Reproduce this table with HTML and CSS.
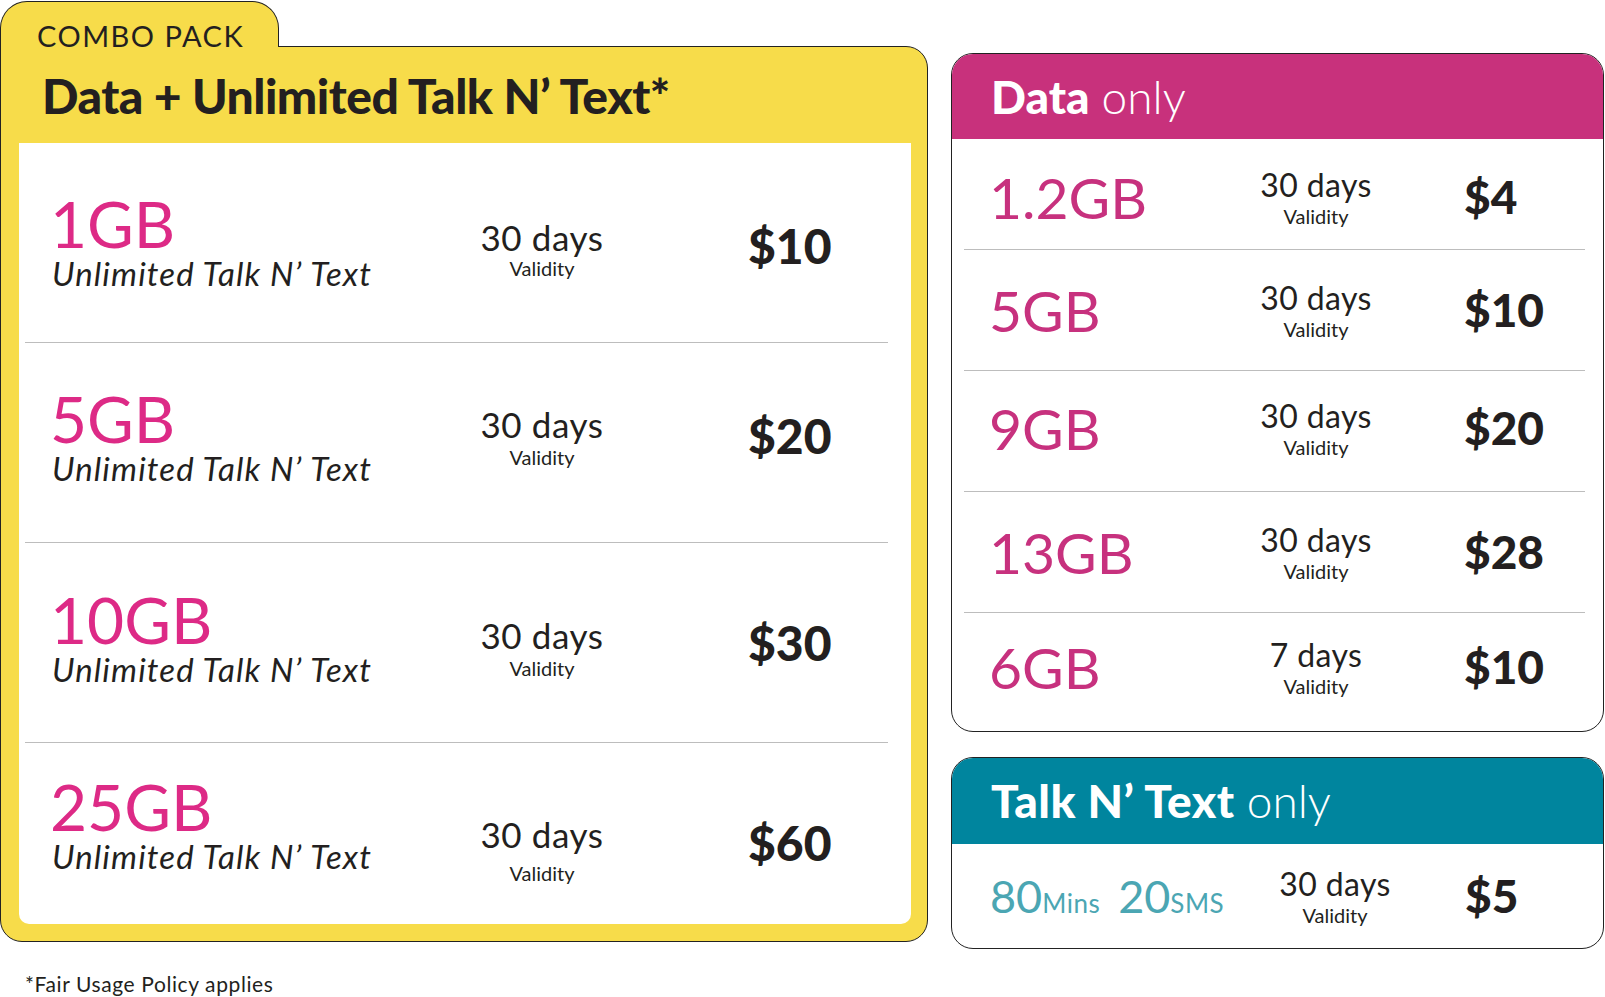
FILE: index.html
```html
<!DOCTYPE html>
<html lang="en">
<head>
<meta charset="utf-8">
<title>Prepaid Packs</title>
<link rel="stylesheet" href="styles.css">
</head>
<body>
<div class="page">
  <section class="combo">
    <div class="tab">COMBO PACK</div>
    <div class="combo-body">
      <h1 class="combo-title">Data + Unlimited Talk N’ Text*</h1>
      <div class="combo-panel">
        <div class="crow r1">
          <div class="plan"><div class="gb">1GB</div><div class="unl">Unlimited Talk N’ Text</div></div>
          <div class="valid"><div class="days">30 days</div><div class="vlabel">Validity</div></div>
          <div class="price">$10</div>
        </div>
        <div class="crow r2">
          <div class="plan"><div class="gb">5GB</div><div class="unl">Unlimited Talk N’ Text</div></div>
          <div class="valid"><div class="days">30 days</div><div class="vlabel">Validity</div></div>
          <div class="price">$20</div>
        </div>
        <div class="crow r3">
          <div class="plan"><div class="gb">10GB</div><div class="unl">Unlimited Talk N’ Text</div></div>
          <div class="valid"><div class="days">30 days</div><div class="vlabel">Validity</div></div>
          <div class="price">$30</div>
        </div>
        <div class="crow r4">
          <div class="plan"><div class="gb">25GB</div><div class="unl">Unlimited Talk N’ Text</div></div>
          <div class="valid"><div class="days">30 days</div><div class="vlabel">Validity</div></div>
          <div class="price">$60</div>
        </div>
      </div>
    </div>
    <p class="note">*Fair Usage Policy applies</p>
  </section>

  <aside class="side">
    <section class="card data">
      <header class="card-head"><b>Data</b><span>only</span></header>
      <div class="drow first">
        <div class="dgb">1.2GB</div>
        <div class="valid"><div class="ddays">30 days</div><div class="vlabel">Validity</div></div>
        <div class="dprice">$4</div>
      </div>
      <div class="drow">
        <div class="dgb">5GB</div>
        <div class="valid"><div class="ddays">30 days</div><div class="vlabel">Validity</div></div>
        <div class="dprice">$10</div>
      </div>
      <div class="drow d3">
        <div class="dgb">9GB</div>
        <div class="valid"><div class="ddays">30 days</div><div class="vlabel">Validity</div></div>
        <div class="dprice">$20</div>
      </div>
      <div class="drow">
        <div class="dgb">13GB</div>
        <div class="valid"><div class="ddays">30 days</div><div class="vlabel">Validity</div></div>
        <div class="dprice">$28</div>
      </div>
      <div class="drow last">
        <div class="dgb">6GB</div>
        <div class="valid"><div class="ddays">7 days</div><div class="vlabel">Validity</div></div>
        <div class="dprice">$10</div>
      </div>
    </section>

    <section class="card talk">
      <header class="card-head teal"><b>Talk N’ Text</b><span>only</span></header>
      <div class="trow">
        <div class="allow"><span class="num">80</span><span class="unit">Mins</span><span class="num second">20</span><span class="unit">SMS</span></div>
        <div class="valid"><div class="ddays">30 days</div><div class="vlabel">Validity</div></div>
        <div class="dprice">$5</div>
      </div>
    </section>
  </aside>
</div>
</body>
</html>
```

FILE: styles.css
```css
html, body {
  margin: 0;
  padding: 0;
  background: #ffffff;
  overflow: hidden;
}

body {
  font-family: Lato, "Open Sans", "DejaVu Sans", sans-serif;
  color: #231f20;
}

.page {
  display: flex;
  align-items: flex-start;
  gap: 23px;
  width: 1605px;
}

/* ---------- Combo pack ---------- */
.combo {
  width: 928px;
  flex: none;
  padding-top: 1px;
}

.tab {
  position: relative;
  z-index: 1;
  width: 279px;
  height: 46px;
  box-sizing: border-box;
  margin-bottom: -1px;
  padding: 19px 0 0 36px;
  background: #f7dc4a;
  border: 1px solid #222;
  border-bottom: none;
  border-radius: 27px 27px 0 0;
  font-size: 29px;
  line-height: 29px;
  letter-spacing: 1.5px;
  white-space: nowrap;
}

.combo-body {
  background: #f7dc4a;
  border: 1px solid #222;
  border-radius: 0 22px 22px 22px;
  padding: 0 16px 17px 18px;
}

.combo-title {
  margin: 0;
  height: 96px;
  display: flex;
  align-items: center;
  padding-left: 23px;
  font-size: 48px;
  font-weight: 900;
  letter-spacing: -0.5px;
  white-space: nowrap;
}

.combo-panel {
  background: #ffffff;
  border-radius: 0 0 10px 10px;
  height: 781px;
  display: flex;
  flex-direction: column;
}

.crow {
  flex: none;
  height: 200px;
  box-sizing: border-box;
  margin: 0 23px 0 6px;
  padding-left: 25px;
  border-bottom: 1px solid #bdbdbd;
  display: grid;
  grid-template-columns: 403px 178px 1fr;
  align-items: center;
}

.crow.r4 {
  flex: 1;
  height: auto;
  border-bottom: none;
}

.gb {
  font-size: 64px;
  font-weight: 400;
  line-height: 64px;
  color: #dd2a86;
}

.unl {
  margin-top: 1px;
  padding-left: 2px;
  font-size: 33px;
  font-style: italic;
  line-height: 33px;
  letter-spacing: 1.1px;
  white-space: nowrap;
}

.valid {
  text-align: center;
}

.days {
  font-size: 35px;
  line-height: 35px;
  letter-spacing: 0.6px;
}

.vlabel {
  margin-top: 5px;
  font-size: 20px;
  line-height: 20px;
}

.price {
  padding-left: 117px;
  font-size: 48px;
  font-weight: 900;
  line-height: 48px;
}

/* per-row fine alignment of the hand-set reference */
.r1 .plan { padding-bottom: 4px; }
.r1 .valid { padding-top: 12px; }
.r1 .vlabel { margin-top: 3px; }
.r1 .price { padding-top: 6px; }

.r2 .plan { padding-bottom: 14px; }
.r2 .valid { padding-bottom: 12px; }
.r2 .price { padding-bottom: 14px; }

.r3 .plan { padding-bottom: 12px; }
.r3 .valid { padding-top: 10px; }

.r4 .plan { padding-bottom: 20px; }
.r4 .valid { padding-top: 32px; }
.r4 .vlabel { margin-top: 11px; }
.r4 .price { padding-top: 18px; }

.note {
  margin: 29px 0 0 25px;
  font-size: 21px;
  line-height: 25px;
  letter-spacing: 0.6px;
}

/* ---------- Side cards ---------- */
.side {
  width: 653px;
  flex: none;
  padding-top: 53px;
  display: flex;
  flex-direction: column;
  gap: 25px;
}

.card {
  box-sizing: border-box;
  border: 1px solid #222;
  border-radius: 22px;
  overflow: hidden;
  background: #ffffff;
  display: flex;
  flex-direction: column;
}

.data {
  height: 679px;
}

.talk {
  height: 192px;
}

.card-head {
  flex: none;
  height: 85px;
  display: flex;
  align-items: center;
  gap: 12px;
  padding-left: 39px;
  background: #c8317c;
  color: #ffffff;
  font-size: 46px;
  line-height: 46px;
  white-space: nowrap;
}

.card-head.teal {
  height: 86px;
  background: #00859e;
}

.card-head b {
  font-weight: 900;
}

.card-head.teal b {
  letter-spacing: 0.5px;
}

.card-head span {
  font-weight: 300;
}

.drow {
  flex: none;
  height: 121px;
  box-sizing: border-box;
  margin: 0 18px 0 12px;
  padding-left: 25px;
  border-bottom: 1px solid #bdbdbd;
  display: grid;
  grid-template-columns: 253px 148px 1fr;
  align-items: center;
}

.drow.first {
  height: 111px;
  padding-top: 6px;
}

.drow.d3 {
  padding-bottom: 6px;
}

.drow.last {
  flex: 1;
  height: auto;
  border-bottom: none;
  padding-bottom: 10px;
}

.dgb {
  font-size: 57px;
  font-weight: 400;
  line-height: 57px;
  color: #c7317e;
}

.ddays {
  font-size: 32px;
  line-height: 32px;
  letter-spacing: 0.4px;
}

.dprice {
  padding-left: 74px;
  font-size: 46px;
  font-weight: 900;
  line-height: 46px;
}

.trow {
  flex: 1;
  padding-left: 38px;
  display: grid;
  grid-template-columns: 260px 170px 1fr;
  align-items: center;
}

.trow .dprice {
  padding-left: 45px;
}

.allow {
  color: #4ba6b3;
  white-space: nowrap;
}

.num {
  font-size: 45px;
  font-weight: 400;
}

.num.second {
  margin-left: 18px;
}

.unit {
  font-size: 26px;
  font-weight: 400;
  letter-spacing: 0.5px;
}
```
